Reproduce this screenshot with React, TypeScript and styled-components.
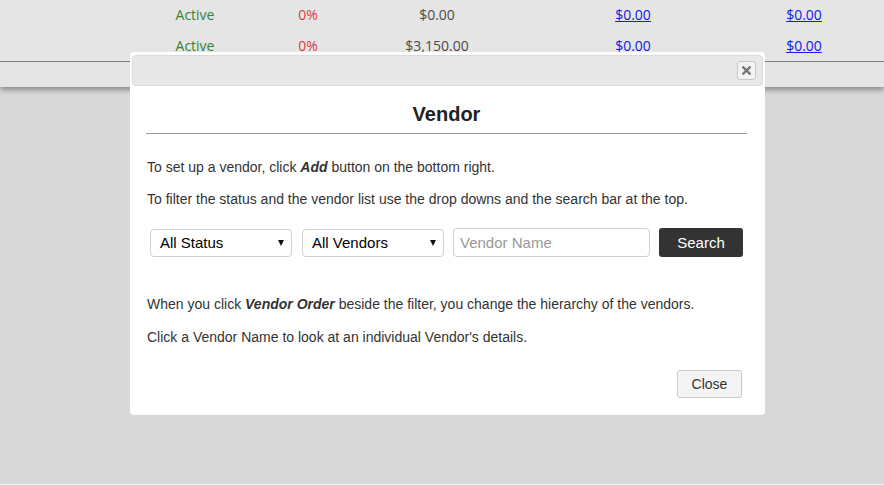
import React from 'react';
import styled, { createGlobalStyle } from 'styled-components';

const rows = [
  { status: 'Active', pct: '0%', total: '$0.00', a: '$0.00', b: '$0.00' },
  { status: 'Active', pct: '0%', total: '$3,150.00', a: '$0.00', b: '$0.00' },
];

const App: React.FC = () => {
  return (
    <Page>
      <GlobalStyle />
      <TableCard>
        <Rows>
          {rows.map((r, i) => (
            <Row key={i}>
              <Cell />
              <Status>{r.status}</Status>
              <Percent>{r.pct}</Percent>
              <Cell>{r.total}</Cell>
              <LinkCell>
                <a href="#">{r.a}</a>
              </LinkCell>
              <LinkCell>
                <a href="#">{r.b}</a>
              </LinkCell>
              <Cell />
            </Row>
          ))}
        </Rows>
        <TableFooter />
      </TableCard>

      <Backdrop>
        <Modal>
          <ModalHeader>
            <XButton aria-label="close">
              <svg width="9" height="9" viewBox="0 0 10 10">
                <path d="M1.5 1.5 L8.5 8.5 M8.5 1.5 L1.5 8.5" stroke="#777" strokeWidth="2.6" strokeLinecap="square" />
              </svg>
            </XButton>
          </ModalHeader>
          <ModalBody>
            <Title>Vendor</Title>
            <Rule />
            <Text $gap={23}>
              To set up a vendor, click <em>Add</em> button on the bottom right.
            </Text>
            <Text $gap={12}>
              To filter the status and the vendor list use the drop downs and the search bar at the top.
            </Text>
            <Filters>
              <SelectWrap $width={142}>
                <Select defaultValue="all">
                  <option value="all">All Status</option>
                </Select>
              </SelectWrap>
              <SelectWrap $width={142} $shift={1}>
                <Select defaultValue="all">
                  <option value="all">All Vendors</option>
                </Select>
              </SelectWrap>
              <SearchInput placeholder="Vendor Name" />
              <SearchButton>Search</SearchButton>
            </Filters>
            <Text $gap={37}>
              When you click <em>Vendor Order</em> beside the filter, you change the hierarchy of the vendors.
            </Text>
            <Text $gap={13}>Click a Vendor Name to look at an individual Vendor's details.</Text>
          </ModalBody>
          <ModalFooter>
            <CloseButton>Close</CloseButton>
          </ModalFooter>
        </Modal>
      </Backdrop>
    </Page>
  );
};

export default App;

const GlobalStyle = createGlobalStyle`
  html, body {
    margin: 0;
    padding: 0;
    background: #f1f1f1;
    overflow: hidden;
  }
  * {
    box-sizing: border-box;
  }
`;

const Page = styled.div`
  position: relative;
  width: 884px;
  height: 485px;
  background: #f1f1f1;
  font-family: 'Open Sans', 'Liberation Sans', sans-serif;
`;

const TableCard = styled.div`
  background: #fff;
  box-shadow: 0 3px 5px rgba(0, 0, 0, 0.35);
`;

const Rows = styled.div`
  margin-top: -1px;
  border-bottom: 1px solid #8a8a8a;
`;

const Row = styled.div`
  display: grid;
  grid-template-columns: 140px 110px 116px 142px 250px 92px 1fr;
  height: 31px;
  align-items: center;
  font-size: 14px;
  color: #555;
`;

const Cell = styled.div`
  text-align: center;
`;

const Status = styled(Cell)`
  color: #3b923b;
`;

const Percent = styled(Cell)`
  color: #f04848;
`;

const LinkCell = styled(Cell)`
  a {
    color: #1a1aff;
    text-decoration: underline;
  }
`;

const TableFooter = styled.div`
  height: 25px;
`;

const Backdrop = styled.div`
  position: absolute;
  inset: 0;
  background: rgba(0, 0, 0, 0.1);
`;

const Modal = styled.div`
  width: 635px;
  margin: 53px 0 0 130px;
  padding: 3px 2px 17px;
  background: #fff;
  border-radius: 4px;
  font-family: 'Liberation Sans', Arial, sans-serif;
  color: #333;
`;

const ModalHeader = styled.div`
  display: flex;
  justify-content: flex-end;
  align-items: center;
  height: 31px;
  padding-right: 6px;
  background: #e8e8e8;
  border: 1px solid #dadada;
  border-radius: 4px;
`;

const XButton = styled.button`
  display: flex;
  align-items: center;
  justify-content: center;
  width: 19px;
  height: 19px;
  padding: 0;
  background: #f3f3f3;
  border: 1px solid #c8c8c8;
  border-radius: 3px;
`;

const ModalBody = styled.div`
  padding: 16px 16px 0 14px;
`;

const Title = styled.h2`
  margin: 0;
  font-size: 20px;
  line-height: 24px;
  font-weight: bold;
  text-align: center;
  color: #222;
`;

const Rule = styled.hr`
  margin: 7px 0 0;
  border: none;
  border-top: 1px solid #999;
`;

const Text = styled.p<{ $gap?: number }>`
  margin: ${(p) => p.$gap ?? 22}px 0 0 1px;
  font-size: 14px;
  line-height: 20px;

  em {
    font-weight: bold;
  }
`;

const Filters = styled.div`
  display: flex;
  gap: 9px;
  margin: 19px 0 0 4px;
  align-items: center;
`;

const SelectWrap = styled.div<{ $width: number; $shift?: number }>`
  position: relative;
  width: ${(p) => p.$width}px;
  margin-left: ${(p) => p.$shift ?? 0}px;

  &::after {
    content: '';
    position: absolute;
    right: 8px;
    top: 11px;
    border-left: 3.5px solid transparent;
    border-right: 3.5px solid transparent;
    border-top: 6px solid #111;
    pointer-events: none;
  }
`;

const Select = styled.select`
  appearance: none;
  width: 100%;
  height: 28px;
  padding: 0 20px 0 9px;
  font-family: 'Liberation Sans', Arial, sans-serif;
  font-size: 15px;
  color: #000;
  background: #fff;
  border: 1px solid #cfcfcf;
  border-radius: 4px;
`;

const SearchInput = styled.input`
  width: 197px;
  height: 29px;
  padding: 0 6px;
  font-family: 'Liberation Sans', Arial, sans-serif;
  font-size: 15px;
  border: 1px solid #cfcfcf;
  border-radius: 4px;

  &::placeholder {
    color: #999;
  }
`;

const SearchButton = styled.button`
  width: 84px;
  height: 29px;
  font-family: 'Liberation Sans', Arial, sans-serif;
  font-size: 15px;
  color: #fff;
  background: #333;
  border: none;
  border-radius: 3px;
`;

const ModalFooter = styled.div`
  display: flex;
  justify-content: flex-end;
  padding: 23px 21px 0 0;
`;

const CloseButton = styled.button`
  width: 65px;
  height: 28px;
  font-family: 'Liberation Sans', Arial, sans-serif;
  font-size: 14px;
  color: #333;
  background: #f4f4f4;
  border: 1px solid #c9c9c9;
  border-radius: 3px;
`;
